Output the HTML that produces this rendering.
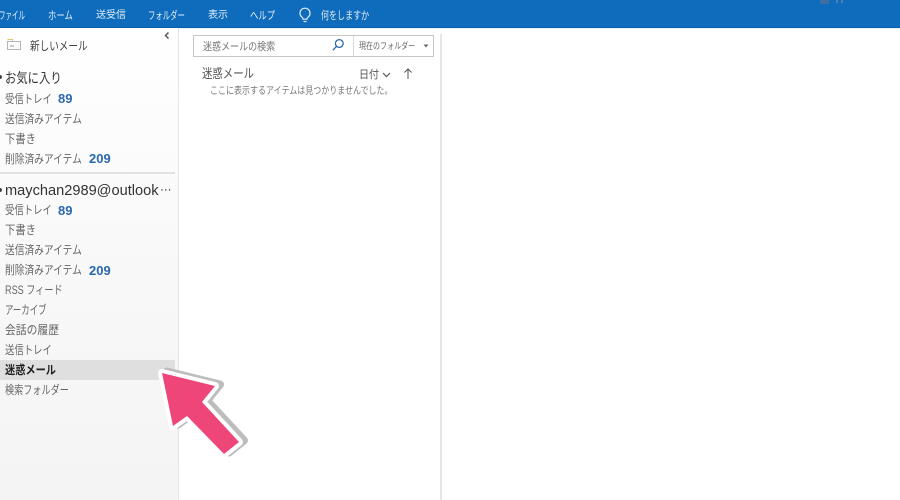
<!DOCTYPE html>
<html lang="ja">
<head>
<meta charset="utf-8">
<title>迷惑メール</title>
<style>
html,body{margin:0;padding:0;width:900px;height:500px;overflow:hidden;background:#fff}
body{position:relative;font-family:"Liberation Sans","Noto Sans CJK JP",sans-serif;color:#555}
.a{position:absolute;white-space:nowrap;line-height:20px;transform-origin:0 50%}
#top{position:absolute;left:0;top:0;width:900px;height:28px;background:#0f6cbd}
#topl{position:absolute;left:0;top:27px;width:900px;height:1px;background:#0d5fa8}
#topw{position:absolute;left:0;top:28px;width:900px;height:1px;background:#e6f3fb}
.t{position:absolute;top:6px;line-height:20px;font-size:11px;color:#e3eef8;white-space:nowrap;transform-origin:0 50%}
#side{position:absolute;left:0;top:28px;width:178px;height:472px;background:linear-gradient(#fff 0,#fcfcfc 100px,#f8f8f8 250px,#f4f4f4 100%);border-right:1px solid #e4e4e4}
.i{font-size:12px;left:5px;color:#666}
.n{position:absolute;font-weight:bold;color:#2a68ae;font-size:13px;line-height:20px;white-space:nowrap}
</style>
</head>
<body>
<div id="top"></div><div id="topl"></div><div id="topw"></div>
<div class="t" style="left:-1px;transform:scaleX(.59)">ファイル</div>
<div class="t" style="left:48px;transform:scaleX(.76)">ホーム</div>
<div class="t" style="left:96px;font-size:10px">送受信</div>
<div class="t" style="left:148px;transform:scaleX(.67)">フォルダー</div>
<div class="t" style="left:208px;font-size:10px">表示</div>
<div class="t" style="left:250px;transform:scaleX(.76)">ヘルプ</div>
<svg style="position:absolute;left:298px;top:7px" width="14" height="17" viewBox="0 0 14 17" fill="none" stroke="#e3eef8" stroke-width="1.2"><path d="M7 1.200a5 5 0 0 0-3 9c.6.5.9 1.200 1 2h4c.1-.8.4-1.500 1-2a5 5 0 0 0-3-9z"/><path d="M5.500 14.500h3"/></svg>
<div class="t" style="left:321px;transform:scaleX(.73)">何をしますか</div>
<svg style="position:absolute;left:815px;top:0" width="35" height="6"><rect x="5" y="0" width="9" height="4" fill="#3e6f9f"/><rect x="21" y="0" width="2" height="3" fill="#4a82b8"/><rect x="26" y="0" width="2" height="3" fill="#4a82b8"/></svg>

<div id="side"></div>
<svg style="position:absolute;left:6px;top:38px" width="16" height="14" viewBox="0 0 16 14" fill="none"><path d="M1.500 1.500h5v2" stroke="#e3c36e"/><rect x="1.500" y="3.500" width="13" height="8" stroke="#b5b5b5" fill="#fbfbfb"/><path d="M4 8h4" stroke="#999"/></svg>
<div class="a" style="left:30px;top:36px;font-size:12px;color:#444;transform:scaleX(.8)">新しいメール</div>
<svg style="position:absolute;left:163px;top:31px" width="8" height="9" fill="none" stroke="#555" stroke-width="1.500"><path d="M5.500 1.500 2.500 4.500 5.500 7.500"/></svg>

<div style="position:absolute;left:-2px;top:75px;width:4px;height:4px;border-radius:2px;background:#444"></div>
<div class="a" style="left:5px;top:68px;font-size:14px;color:#333;transform:scaleX(.81)">お気に入り</div>
<div class="a i" style="top:89px;transform:scaleX(.78)">受信トレイ</div><div class="n" style="left:58px;top:89px">89</div>
<div class="a i" style="top:109px;transform:scaleX(.81)">送信済みアイテム</div>
<div class="a i" style="top:129px;transform:scaleX(.86)">下書き</div>
<div class="a i" style="top:149px;transform:scaleX(.81)">削除済みアイテム</div><div class="n" style="left:89px;top:149px">209</div>
<div style="position:absolute;left:0;top:172px;width:175px;height:2px;background:#e2e2e2"></div>

<div style="position:absolute;left:-2px;top:188px;width:4px;height:4px;border-radius:2px;background:#444"></div>
<div class="a" style="left:5px;top:181px;font-size:14.6px;color:#333">maychan2989@outlook</div>
<div class="a" style="left:160px;top:181px;font-size:13px;color:#555;font-family:'DejaVu Sans',sans-serif;transform:scaleX(.9)">⋯</div>
<div class="a i" style="top:200px;transform:scaleX(.78)">受信トレイ</div><div class="n" style="left:58px;top:201px">89</div>
<div class="a i" style="top:220px;transform:scaleX(.86)">下書き</div>
<div class="a i" style="top:240px;transform:scaleX(.81)">送信済みアイテム</div>
<div class="a i" style="top:260px;transform:scaleX(.81)">削除済みアイテム</div><div class="n" style="left:89px;top:261px">209</div>
<div class="a i" style="top:280px;transform:scaleX(.76)">RSS フィード</div>
<div class="a i" style="top:300px;transform:scaleX(.7)">アーカイブ</div>
<div class="a i" style="top:320px;transform:scaleX(.9)">会話の履歴</div>
<div class="a i" style="top:340px;transform:scaleX(.78)">送信トレイ</div>
<div style="position:absolute;left:0;top:360px;width:175px;height:20px;background:#dfdfdf"></div>
<div class="a i" style="top:360px;font-weight:bold;color:#222;transform:scaleX(.85)">迷惑メール</div>
<div class="a i" style="top:380px;transform:scaleX(.76)">検索フォルダー</div>

<div style="position:absolute;left:193px;top:35px;width:239px;height:20px;border:1px solid #c6c6c6"></div>
<div style="position:absolute;left:353px;top:36px;width:1px;height:20px;background:#d8d8d8"></div>
<div class="a" style="left:203px;top:37px;font-size:11px;color:#777;transform:scaleX(.82)">迷惑メールの検索</div>
<svg style="position:absolute;left:331px;top:38px" width="14" height="14" viewBox="0 0 14 14" fill="none" stroke="#2a68ae" stroke-width="1.300"><circle cx="8.300" cy="5.500" r="3.900"/><path d="M5.500 8.300 1.800 12.300"/></svg>
<div class="a" style="left:359px;top:36px;font-size:9px;color:#666;transform:scaleX(.78)">現在のフォルダー</div>
<svg style="position:absolute;left:423px;top:44px" width="7" height="4"><path d="M0.500 0.500h5l-2.500 3z" fill="#666"/></svg>

<div class="a" style="left:202px;top:64px;font-size:13px;color:#555;transform:scaleX(.8)">迷惑メール</div>
<div class="a" style="left:359px;top:65px;font-size:11px;color:#555;transform:scaleX(.91)">日付</div>
<svg style="position:absolute;left:382px;top:72px" width="9" height="6" fill="none" stroke="#555" stroke-width="1.200"><path d="M1 1 4.500 4.500 8 1"/></svg>
<svg style="position:absolute;left:403px;top:68px" width="10" height="12" fill="none" stroke="#555" stroke-width="1"><path d="M5 11V1M1.500 4.500 5 1 8.500 4.500"/></svg>
<div class="a" style="left:210px;top:82px;font-size:10px;color:#777;transform:scaleX(.8)">ここに表示するアイテムは見つかりませんでした。</div>

<div style="position:absolute;left:440px;top:34px;width:2px;height:466px;background:#e6e6e6"></div>

<svg style="position:absolute;left:0;top:0" width="900" height="500">
<path d="M162 373 215 386 202 402 239 442 224 454 187 416 173 426Z" fill="#bdbdbd" stroke="#bdbdbd" stroke-width="8" stroke-linejoin="round" transform="translate(5 -1.500)"/>
<path d="M162 373 215 386 202 402 239 442 224 454 187 416 173 426Z" fill="#fff" stroke="#fff" stroke-width="8" stroke-linejoin="round"/>
<path d="M162 373 215 386 202 402 239 442 224 454 187 416 173 426Z" fill="#ee4678"/>
</svg>
</body>
</html>
